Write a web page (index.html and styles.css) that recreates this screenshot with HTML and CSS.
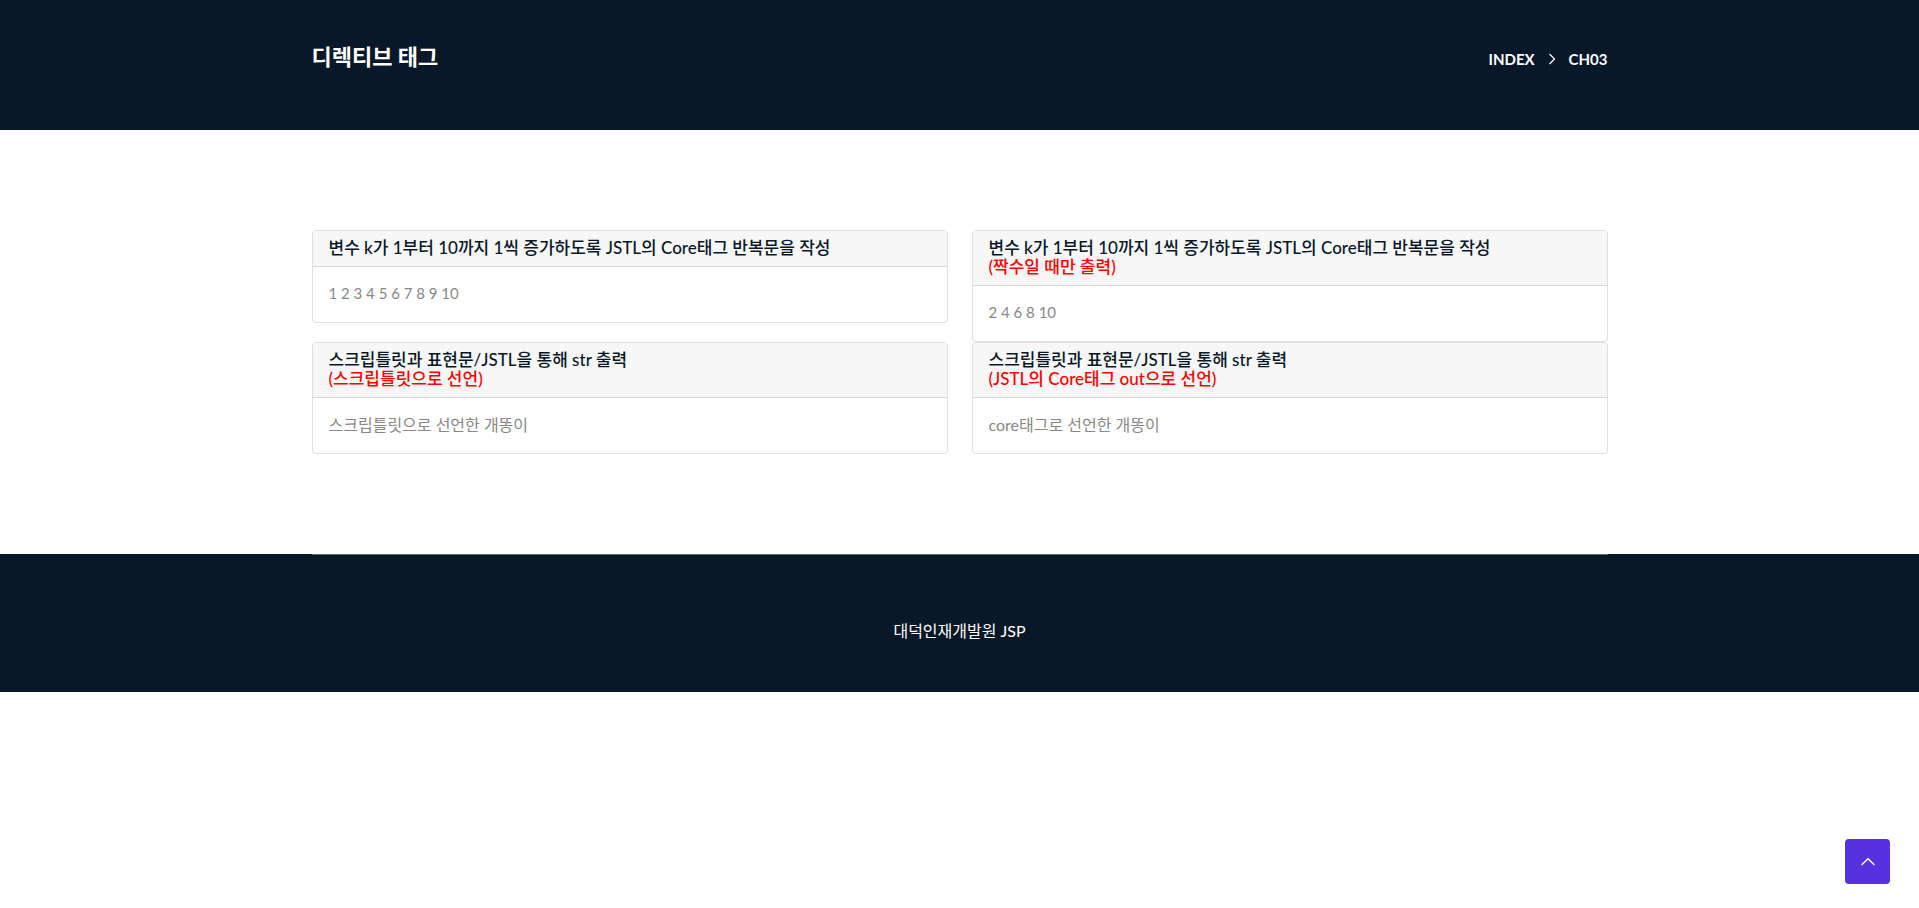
FILE: index.html
```html
<!DOCTYPE html>
<html lang="ko">
<head>
<meta charset="utf-8">
<meta name="viewport" content="width=device-width, initial-scale=1">
<title>디렉티브 태그</title>
<link rel="stylesheet" href="styles.css">
</head>
<body>
<header class="page-header">
  <div class="container header-row">
    <h1 class="page-title">디렉티브 태그</h1>
    <nav class="breadcrumb" aria-label="Breadcrumb">
      <a href="#index">INDEX</a>
      <svg class="chevron" viewBox="0 0 8 12" aria-hidden="true"><path d="M1.5 1 6.5 6l-5 5"/></svg>
      <a href="#ch03">CH03</a>
    </nav>
  </div>
</header>
<main class="container content">
  <section class="card">
    <h2 class="card-header">변수 k가 1부터 10까지 1씩 증가하도록 JSTL의 Core태그 반복문을 작성</h2>
    <p class="card-body numbers">1 2 3 4 5 6 7 8 9 10</p>
  </section>
  <section class="card">
    <h2 class="card-header">변수 k가 1부터 10까지 1씩 증가하도록 JSTL의 Core태그 반복문을 작성<br><span class="note">(짝수일 때만 출력)</span></h2>
    <p class="card-body numbers">2 4 6 8 10</p>
  </section>
  <section class="card">
    <h2 class="card-header">스크립틀릿과 표현문/JSTL을 통해 str 출력<br><span class="note">(스크립틀릿으로 선언)</span></h2>
    <p class="card-body">스크립틀릿으로 선언한 개똥이</p>
  </section>
  <section class="card">
    <h2 class="card-header">스크립틀릿과 표현문/JSTL을 통해 str 출력<br><span class="note">(JSTL의 Core태그 out으로 선언)</span></h2>
    <p class="card-body">core태그로 선언한 개똥이</p>
  </section>
</main>
<footer class="page-footer">
  <div class="container"><p class="footer-text">대덕인재개발원 JSP</p></div>
</footer>
<a class="scroll-top" href="#top" aria-label="Scroll to top">
  <svg viewBox="0 0 16 16" aria-hidden="true"><path d="M1.500 11 8 4.700l6.500 6.300"/></svg>
</a>
</body>
</html>
```
FILE: styles.css
```css
* {
  box-sizing: border-box;
}

body {
  margin: 0;
  background: #fff;
  color: #888;
  font-family: Lato, "Noto Sans CJK KR", sans-serif;
  font-size: 16px;
  line-height: 23px;
}

h1, h2, p {
  margin: 0;
}

.container {
  width: 100%;
  max-width: 1320px;
  margin: 0 auto;
  padding: 0 12px;
}

.page-header {
  padding: 39px 0 51px;
  background: #081828;
}

.header-row {
  display: flex;
  align-items: center;
  justify-content: space-between;
  min-height: 40px;
}

.page-title {
  padding-bottom: 4px;
  color: #fff;
  font-size: 22px;
  font-weight: 700;
  line-height: 26px;
}

.breadcrumb {
  display: flex;
  align-items: center;
  gap: 13px;
}

.breadcrumb a {
  color: #fff;
  font-size: 15px;
  font-weight: 700;
  text-decoration: none;
}

.chevron {
  width: 8px;
  height: 12px;
  fill: none;
  stroke: #fff;
  stroke-width: 1.2;
}

.content {
  display: grid;
  grid-template-columns: repeat(2, minmax(0, 1fr));
  column-gap: 24px;
  align-items: start;
  padding-top: 100px;
  padding-bottom: 100px;
}

.card {
  border: 1px solid #dfdfdf;
  border-radius: 4px;
  overflow: hidden;
}

.card-header {
  padding: 7px 16px 9px;
  border-bottom: 1px solid #d8d8d8;
  background: #f7f7f7;
  color: #081828;
  font-size: 17px;
  font-weight: 500;
  line-height: 19px;
}

.note {
  color: #f00;
}

.card-body {
  padding: 15px 16px 17px;
}

.numbers {
  font-size: 15px;
}

.page-footer {
  background: #081828;
}

.footer-text {
  padding: 64px 0 50px;
  border-top: 1px solid #5a666e;
  color: #fff;
  text-align: center;
}

.scroll-top {
  position: fixed;
  right: 29px;
  bottom: 24px;
  display: flex;
  align-items: center;
  justify-content: center;
  width: 45px;
  height: 45px;
  border-radius: 4px;
  background: #5830e0;
}

.scroll-top svg {
  width: 16px;
  height: 16px;
  fill: none;
  stroke: #fff;
  stroke-width: 1.4;
}
```
